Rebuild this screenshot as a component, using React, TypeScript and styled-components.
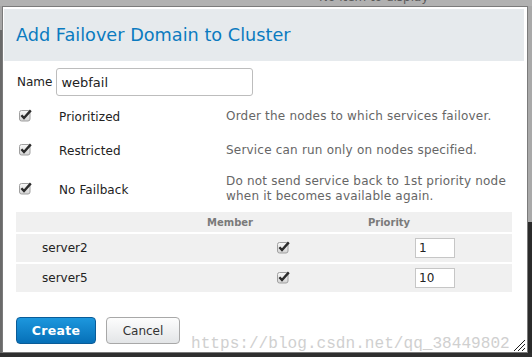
import styled, { createGlobalStyle } from 'styled-components';

const GlobalStyle = createGlobalStyle`
  html, body {
    margin: 0;
    padding: 0;
    background: #b1b1b1;
  }
  body {
    font-family: "DejaVu Sans", Verdana, sans-serif;
  }
`;

interface Option {
  label: string;
  desc: string[];
}

const options: Option[] = [
  { label: 'Prioritized', desc: ['Order the nodes to which services failover.'] },
  { label: 'Restricted', desc: ['Service can run only on nodes specified.'] },
  {
    label: 'No Failback',
    desc: ['Do not send service back to 1st priority node', 'when it becomes available again.'],
  },
];

const members = [
  { name: 'server2', priority: '1' },
  { name: 'server5', priority: '10' },
];

const CheckMark = () => (
  <svg width="14" height="13" viewBox="0 0 14 13">
    <defs>
      <linearGradient id="cbfill" x1="0" y1="0" x2="0" y2="1">
        <stop offset="0" stopColor="#f8f8f8" />
        <stop offset="1" stopColor="#d4d4d4" />
      </linearGradient>
    </defs>
    <rect x="0.5" y="1.5" width="10.5" height="10.5" rx="2" fill="url(#cbfill)" stroke="#a0a0a0" />
    <path d="M2.4 6.2 L5 9 L11.8 1.4" fill="none" stroke="#2b2b2b" strokeWidth="2.4" strokeLinejoin="miter" />
  </svg>
);

const App = () => {
  return (
    <>
      <GlobalStyle />
      <Page>
        <TopStrip>
          <NoItems>No item to display</NoItems>
        </TopStrip>
        <LeftGutter />
        <Dialog>
          <Header>
            <Title>Add Failover Domain to Cluster</Title>
          </Header>
          <Body>
            <NameRow>
              <NameLabel>Name</NameLabel>
              <TextInput defaultValue="webfail" />
            </NameRow>
            <Options>
              {options.map((o) => (
                <OptionRow key={o.label} $tall={o.desc.length > 1}>
                  <BoxCell>
                    <CheckMark />
                  </BoxCell>
                  <OptionLabel>{o.label}</OptionLabel>
                  <OptionDesc>
                    {o.desc.map((line) => (
                      <div key={line}>{line}</div>
                    ))}
                  </OptionDesc>
                </OptionRow>
              ))}
            </Options>
            <Table>
              <TableHead>
                <span />
                <span>Member</span>
                <span>Priority</span>
                <span />
              </TableHead>
              {members.map((m) => (
                <TableRow key={m.name}>
                  <span />
                  <ServerName>{m.name}</ServerName>
                  <BoxCell>
                    <CheckMark />
                  </BoxCell>
                  <PriorityInput defaultValue={m.priority} />
                </TableRow>
              ))}
            </Table>
            <Buttons>
              <PrimaryButton>Create</PrimaryButton>
              <SecondaryButton>Cancel</SecondaryButton>
            </Buttons>
          </Body>
          <Watermark>https://blog.csdn.net/qq_38449802</Watermark>
          <Grip>
            <svg width="12" height="12" viewBox="0 0 12 12">
              <path d="M1 12 L12 1 M5 12 L12 5 M9 12 L12 9" stroke="#1e1e1e" strokeWidth="1" />
              <path d="M2 12 L12 2 M6 12 L12 6 M10 12 L12 10" stroke="#ffffff" strokeWidth="1" />
            </svg>
          </Grip>
        </Dialog>
        <RightGutter />
        <BottomStrip />
      </Page>
    </>
  );
};

export default App;

const Page = styled.div`
  width: 532px;
  height: 357px;
  overflow: hidden;
  display: grid;
  grid-template-columns: 2px 526px 4px;
  grid-template-rows: 6px 347px 4px;
  background: #b1b1b1;
`;

const TopStrip = styled.div`
  grid-column: 1 / -1;
  overflow: hidden;
  padding-left: 319px;
`;

const NoItems = styled.div`
  margin-top: -9px;
  font-size: 12px;
  line-height: 12px;
  color: #5a5a5a;
`;

const LeftGutter = styled.div`
  background: linear-gradient(#a6a6a6 0 24px, #6a6a6a 24px);
`;

const RightGutter = styled.div`
  background: linear-gradient(#a9a9a9 0 216px, #2b2b2b 216px);
`;

const BottomStrip = styled.div`
  grid-column: 1 / -1;
  background: #2f2f2f;
`;

const Dialog = styled.div`
  position: relative;
  box-sizing: border-box;
  border: 1px solid #7b7b7b;
  background: #fff;
  padding: 2px 3px 0 1px;
  display: flex;
  flex-direction: column;
`;

const Header = styled.div`
  height: 52px;
  display: flex;
  align-items: center;
  padding-left: 12px;
  background: #e6eaed;
`;

const Title = styled.h2`
  margin: 0;
  font-size: 17.7px;
  font-weight: normal;
  color: #0b7bc0;
`;

const Body = styled.div`
  padding: 7px 12px 0 12px;
  font-size: 12px;
  color: #222;
`;

const NameRow = styled.div`
  display: flex;
  align-items: center;
  gap: 4px;
  height: 28px;
  padding-left: 1px;
`;

const NameLabel = styled.span`
  font-size: 12px;
`;

const TextInput = styled.input`
  box-sizing: border-box;
  width: 197px;
  height: 28px;
  border: 1px solid #bdbdbd;
  border-radius: 3px;
  padding: 0 4px;
  font-family: "DejaVu Sans", sans-serif;
  font-size: 13px;
  color: #222;
  outline: none;
`;

const Options = styled.div`
  margin-top: 3px;
  display: flex;
  flex-direction: column;
`;

const OptionRow = styled.div<{ $tall?: boolean }>`
  display: grid;
  grid-template-columns: 43px 167px 1fr;
  align-items: center;
  height: ${(p) => (p.$tall ? '44px' : '34px')};
`;

const BoxCell = styled.span`
  display: flex;
  padding-left: 3px;
  & > svg {
    display: block;
    margin-top: -2px;
  }
`;

const OptionLabel = styled.span`
  padding-top: 2px;
  letter-spacing: 0.1px;
`;

const OptionDesc = styled.div`
  color: #666;
  line-height: 15px;
  letter-spacing: 0.2px;
`;

const Table = styled.div`
  margin-top: 1px;
  display: flex;
  flex-direction: column;
  gap: 2px;
`;

const TableHead = styled.div`
  display: grid;
  grid-template-columns: 130px 168px 150px 1fr;
  align-items: center;
  height: 20px;
  background: #f0f0f0;
  font-size: 10px;
  font-weight: bold;
  color: #7a7a7a;
  text-align: center;
`;

const TableRow = styled.div`
  display: grid;
  grid-template-columns: 26px 232px 141px 40px 1fr;
  align-items: center;
  height: 28px;
  background: #f0f0f0;
`;

const ServerName = styled.span`
  font-size: 12px;
`;

const PriorityInput = styled.input`
  box-sizing: border-box;
  width: 40px;
  height: 20px;
  border: 1px solid #c6c6c6;
  padding: 0 3px;
  font-family: "DejaVu Sans", sans-serif;
  font-size: 12px;
  color: #222;
  background: #fff;
  outline: none;
`;

const Buttons = styled.div`
  margin-top: 25px;
  display: flex;
  gap: 10px;
`;

const BaseButton = styled.button`
  box-sizing: border-box;
  height: 27px;
  border-radius: 4px;
  font-family: "DejaVu Sans", sans-serif;
  padding: 0;
  cursor: pointer;
`;

const PrimaryButton = styled(BaseButton)`
  width: 80px;
  border: 1px solid #0a5c98;
  background: linear-gradient(#1d97dd, #0670b8);
  color: #fff;
  font-size: 12.5px;
  font-weight: bold;
  letter-spacing: 0.3px;
`;

const SecondaryButton = styled(BaseButton)`
  width: 74px;
  border: 1px solid #a8a8a8;
  background: linear-gradient(#fdfdfd, #e3e5e7);
  color: #333;
  font-size: 12px;
`;

const Watermark = styled.div`
  position: absolute;
  left: 188px;
  top: 328px;
  font-family: "Liberation Mono", monospace;
  font-size: 16.1px;
  line-height: 18px;
  color: #d0d0d0;
  white-space: nowrap;
  pointer-events: none;
`;

const Grip = styled.div`
  position: absolute;
  right: 2px;
  bottom: 1px;
  line-height: 0;
`;
